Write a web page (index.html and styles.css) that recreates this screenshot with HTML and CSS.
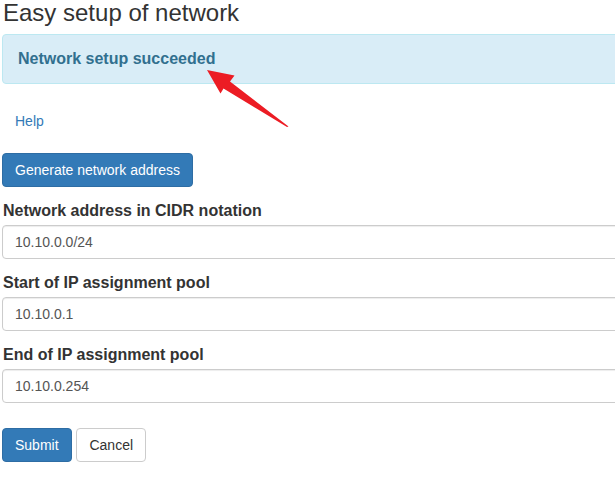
FILE: index.html
```html
<!DOCTYPE html>
<html lang="en">
<head>
  <meta charset="UTF-8" />
  <title>Easy setup of network</title>
  <link rel="stylesheet" href="styles.css">
</head>
<body>
  <div id="page">
    <h3 class="title">Easy setup of network</h3>

    <div class="alert-info">Network setup succeeded</div>

    <div class="help"><a href="#">Help</a></div>

    <button class="btn btn-primary gen-btn" type="button">Generate network address</button>

    <form>
      <div class="form-group">
        <label for="cidr">Network address in CIDR notation</label>
        <input type="text" id="cidr" class="form-control" value="10.10.0.0/24">
      </div>
      <div class="form-group">
        <label for="poolStart">Start of IP assignment pool</label>
        <input type="text" id="poolStart" class="form-control" value="10.10.0.1">
      </div>
      <div class="form-group">
        <label for="poolEnd">End of IP assignment pool</label>
        <input type="text" id="poolEnd" class="form-control" value="10.10.0.254">
      </div>

      <div class="form-actions">
        <button class="btn btn-primary" type="submit">Submit</button>
        <button class="btn btn-default cancel-btn" type="button">Cancel</button>
      </div>
    </form>

    <!-- annotation arrow drawn over the screenshot -->
    <svg class="arrow" width="300" height="140" viewBox="0 0 300 140">
      <polygon points="207,70 234.5,75.5 230,81.5 288.5,126.5 287,127 223.5,88.5 220.5,93.5" fill="#ec1c24"/>
    </svg>
  </div>
</body>
</html>
```

FILE: styles.css
```css
html, body {
  overflow: hidden;
}
body {
  margin: 0;
  font-family: "Liberation Sans", Arial, sans-serif;
  font-size: 14px;
  line-height: 20px;
  color: #333;
  background: #fff;
}
#page {
  position: relative;
  width: 760px;
  padding-left: 2px;
}
.title {
  margin: 0 0 0 1px;
  font-size: 24px;
  font-weight: normal;
  line-height: 26px;
  color: #333;
}
.alert-info {
  margin-top: 8px;
  padding: 15px;
  font-size: 16px;
  font-weight: bold;
  line-height: 18px;
  color: #31708f;
  background: #d9edf7;
  border: 1px solid #bce8f1;
  border-radius: 4px;
}
.help {
  margin-top: 27px;
  padding-left: 13px;
}
.help a {
  color: #337ab7;
  text-decoration: none;
}
.btn {
  display: inline-block;
  padding: 6px 12px;
  font-family: inherit;
  font-size: 14px;
  line-height: 20px;
  border: 1px solid transparent;
  border-radius: 4px;
  cursor: pointer;
}
.btn-primary {
  color: #fff;
  background: #337ab7;
  border-color: #2e6da4;
}
.btn-default {
  color: #333;
  background: #fff;
  border-color: #ccc;
}
.cancel-btn {
  margin-left: 1px;
}
.gen-btn {
  margin-top: 22px;
}
form {
  margin-top: 14px;
}
.form-group {
  margin-bottom: 14px;
}
.form-group label {
  display: block;
  margin: 0 0 4px 1px;
  font-size: 16px;
  font-weight: bold;
  line-height: 20px;
}
.form-control {
  display: block;
  box-sizing: border-box;
  width: 100%;
  height: 34px;
  padding: 6px 12px;
  font-family: inherit;
  font-size: 14px;
  color: #555;
  background: #fff;
  border: 1px solid #ccc;
  border-radius: 4px;
  box-shadow: inset 0 1px 1px rgba(0, 0, 0, .075);
}
.form-actions {
  margin-top: 25px;
}
.arrow {
  position: absolute;
  top: 0;
  left: 0;
}
```
